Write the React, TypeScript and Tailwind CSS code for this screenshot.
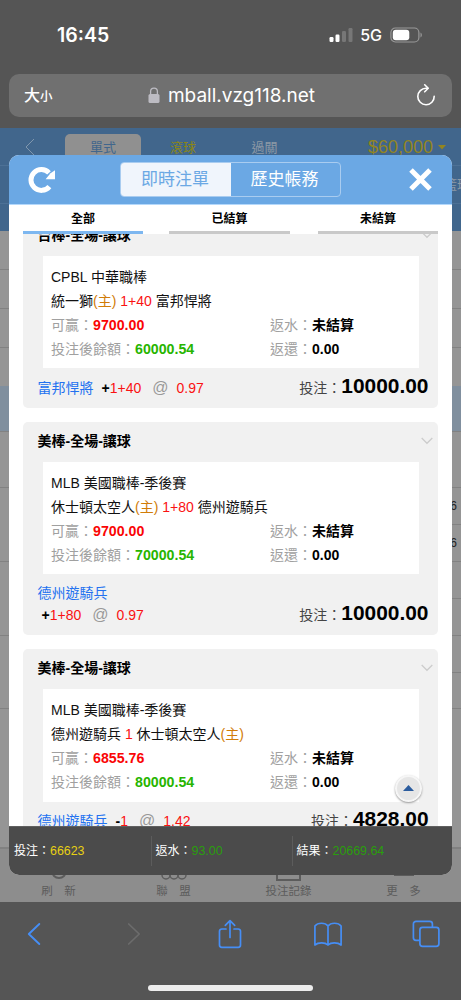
import React from 'react';

interface Bet {
  id: number;
  title: string;
  league: string;
  left: string;
  leftHome?: boolean;
  line: string;
  right: string;
  rightHome?: boolean;
  win: string;
  balance: string;
  pick: string;
  sign: string;
  pickLine: string;
  odds: string;
  stake: string;
  wrap?: boolean;
}

const BETS: Bet[] = [
  {
    id: 1, title: '台棒-全場-讓球', league: 'CPBL 中華職棒', left: '統一獅', leftHome: true, line: '1+40', right: '富邦悍將',
    win: '9700.00', balance: '60000.54', pick: '富邦悍將', sign: '+', pickLine: '1+40', odds: '0.97', stake: '10000.00',
  },
  {
    id: 2, title: '美棒-全場-讓球', league: 'MLB 美國職棒-季後賽', left: '休士頓太空人', leftHome: true, line: '1+80', right: '德州遊騎兵',
    win: '9700.00', balance: '70000.54', pick: '德州遊騎兵', sign: '+', pickLine: '1+80', odds: '0.97', stake: '10000.00', wrap: true,
  },
  {
    id: 3, title: '美棒-全場-讓球', league: 'MLB 美國職棒-季後賽', left: '德州遊騎兵', line: '1', right: '休士頓太空人', rightHome: true,
    win: '6855.76', balance: '80000.54', pick: '德州遊騎兵', sign: '-', pickLine: '1', odds: '1.42', stake: '4828.00',
  },
];

const StatusBar = () => (
  <div className="flex h-[74px] items-start justify-between pl-[57px] pr-[38px] pt-[20px] font-['Inter','Noto_Sans_CJK_TC',sans-serif] text-white">
    <span className="text-[19.5px] font-semibold leading-[30px]">16:45</span>
    <div className="flex h-[30px] items-center">
      <svg width="24" height="16" viewBox="0 0 24 16" className="mr-[7px]">
        <rect x="0.5" y="10" width="4" height="5" rx="1.2" fill="#fff" />
        <rect x="6.5" y="7.5" width="4" height="7.5" rx="1.2" fill="#fff" />
        <rect x="13" y="4" width="4" height="11" rx="1.2" fill="#777" />
        <rect x="19.5" y="1" width="4" height="14" rx="1.2" fill="#777" />
      </svg>
      <span className="mr-[8px] text-[16px] font-medium leading-[30px]">5G</span>
      <svg width="33" height="16" viewBox="0 0 33 16">
        <rect x="0.9" y="1" width="28" height="14" rx="4.5" fill="none" stroke="#999" strokeWidth="1.2" />
        <rect x="2.8" y="2.8" width="16.5" height="10.4" rx="3" fill="#fff" />
        <path d="M30.5 5.5c1.8.8 1.8 4.2 0 5z" fill="#999" />
      </svg>
    </div>
  </div>
);

const AddressBar = () => (
  <div className="mx-[9px] flex h-[43px] items-center justify-between rounded-[10px] bg-[#707070] pl-[15px] pr-[16px] font-['Inter','Noto_Sans_CJK_TC',sans-serif] text-white">
    <div className="flex w-[120px] items-baseline font-medium leading-none">
      <span className="text-[16px]">大</span>
      <span className="text-[12.5px]">小</span>
    </div>
    <div className="ml-[2px] flex items-center">
      <svg width="12" height="17" viewBox="0 0 12 17" className="mr-[8px]">
        <path d="M2.6 8V4.6a3.4 3.4 0 0 1 6.8 0V8" fill="none" stroke="#bdbcc3" strokeWidth="1.3" />
        <rect x="0.5" y="7" width="11" height="9" rx="1.6" fill="#bdbcc3" />
      </svg>
      <span className="text-[19px] leading-[24px]">mball.vzg118.net</span>
    </div>
    <div className="flex w-[119px] justify-end">
      <svg width="20" height="24" viewBox="0 0 20 24" className="mb-[2px]" fill="none" stroke="#fff" strokeWidth="1.6" strokeLinecap="round" strokeLinejoin="round">
        <path d="M11.8 5.3H10.2A8.2 8.2 0 1 0 18.2 13.3" />
        <path d="M8.7 1.8 12.2 5.3 8.7 8.8" />
      </svg>
    </div>
  </div>
);

// Dimmed betting page behind the dialog
const Backdrop = () => (
  <div className="flex h-full flex-col bg-[#959595]">
    <div className="h-[103px] bg-[#41668c]">
      <div className="flex h-[38px] items-start border-b border-[#4d7196] pt-[6px] text-[13px] leading-[27px]">
        <svg width="10" height="18" viewBox="0 0 10 18" className="ml-[25px] mt-[4px]" fill="none" stroke="#8097ae" strokeWidth="1">
          <path d="M9 1 1 9l8 8" />
        </svg>
        <div className="ml-[30px] h-[31px] w-[76px] rounded-t-[5px] bg-[#909090] text-center text-[#41668c]">單式</div>
        <div className="w-[84px] text-center text-[#8c8614]">滾球</div>
        <div className="w-[79px] text-center text-[#8d99a6]">過關</div>
        <div className="ml-[64px] text-[18px] leading-[26px] text-[#93851f]">$60,000</div>
        <svg width="8" height="5" viewBox="0 0 8 5" className="ml-[5px] mt-[11px]">
          <path d="M0 0h8L4 4.5z" fill="#93851f" />
        </svg>
      </div>
      <div className="flex h-[38px] items-center justify-end overflow-hidden border-b border-[#4d7196]">
        <span className="-mr-[9px] text-[13px] text-[#8d99a6]">籃球</span>
      </div>
    </div>
    <div className="h-[39px] border-b border-[#828282]" />
    <div className="h-[39px] border-b border-[#828282]" />
    <div className="h-[39px] border-b border-[#828282]" />
    <div className="h-[38px]" />
    <div className="h-[46px] border-b border-[#828282] bg-[#808f9e]" />
    <div className="flex h-[277px] justify-between">
      <div className="w-[20px]">
        <div className="h-[56px] border-b border-[#828282]" />
        <div className="h-[74px] border-b border-[#828282]" />
        <div className="h-[74px] border-b border-[#828282]" />
        <div className="h-[73px] border-b border-[#828282]" />
      </div>
      <div className="w-[20px] text-right text-[12px] text-[#222]">
        <div className="h-[56px] border-b border-[#828282]" />
        <div className="h-[37px] border-b border-[#828282] pr-[4px] leading-[37px]">6</div>
        <div className="h-[37px] border-b border-[#828282] pr-[4px] leading-[37px]">6</div>
        <div className="h-[37px] border-b border-[#828282]" />
        <div className="h-[37px] border-b border-[#828282]" />
        <div className="h-[37px] border-b border-[#828282]" />
        <div className="h-[36px] border-b border-[#828282]" />
      </div>
    </div>
    <div className="h-[138px]" />
    <div className="flex flex-1 items-end border-t-2 border-[#818181] bg-[#8d8d8d] text-center text-[11.5px] leading-[14px] text-[#5c5c5c]">
      <div className="ml-[1px] flex w-[115px] flex-col items-center pb-[4px]">
        <svg width="18" height="18" viewBox="0 0 18 18" className="mb-[3px]" fill="none" stroke="#5c5c5c" strokeWidth="2"><circle cx="9" cy="8" r="7" /></svg>
        <span>刷　新</span>
      </div>
      <div className="flex w-[115px] flex-col items-center pb-[4px]">
        <svg width="26" height="10" viewBox="0 0 26 10" className="mb-[4px]" fill="none" stroke="#5c5c5c" strokeWidth="1.5">
          <circle cx="5" cy="5" r="4" /><circle cx="13" cy="5" r="4" /><circle cx="21" cy="5" r="4" />
        </svg>
        <span>聯　盟</span>
      </div>
      <div className="flex w-[115px] flex-col items-center pb-[4px]">
        <div className="mb-[3px] h-[18px] w-[25px] border-2 border-[#5c5c5c]" />
        <span>投注記錄</span>
      </div>
      <div className="flex w-[115px] flex-col items-center pb-[4px]">
        <div className="mb-[8px] h-[2px] w-[20px] bg-[#5c5c5c]" />
        <span>更　多</span>
      </div>
    </div>
  </div>
);

const Home = () => <span className="text-[#d17c08]">(主)</span>;

const BetCard: React.FC<{ bet: Bet }> = ({ bet }) => (
  <div className="mb-[14px] shrink-0 rounded-[5px] bg-[#f1f1f1] text-[14px] leading-[24px] text-[#111]">
    <div className="flex h-[40px] items-center justify-between pb-[2px] pl-[14.5px] pr-[5px]">
      <span className="font-bold text-black">{bet.title}</span>
      <svg width="12" height="8" viewBox="0 0 12 8" fill="none" stroke="#ccc" strokeWidth="1.3">
        <path d="M0.7 1 6 6.3 11.3 1" />
      </svg>
    </div>
    <div className="ml-[20px] mr-[19.5px] h-[112.5px] bg-white pl-[8px] pt-[9px]">
      <div>{bet.league}</div>
      <div>
        {bet.left}{bet.leftHome && <Home />} <span className="text-[#fa1212]">{bet.line}</span> {bet.right}{bet.rightHome && <Home />}
      </div>
      <div className="flex text-[#a0a0a0]">
        <div className="w-[219px]">可贏：<b className="text-[14.2px] text-[#fa0505]">{bet.win}</b></div>
        <div>返水：<b className="text-black">未結算</b></div>
      </div>
      <div className="flex text-[#a0a0a0]">
        <div className="w-[219px]">投注後餘額：<b className="text-[14.2px] text-[#27b500]">{bet.balance}</b></div>
        <div>返還：<b className="text-black">0.00</b></div>
      </div>
    </div>
    <div className={`flex items-end justify-between pl-[14.5px] pr-[9.5px] ${bet.wrap ? 'h-[61px]' : 'h-[39.5px]'}`}>
      <div className={`pb-[9px] leading-[22px] ${bet.wrap ? '' : 'flex'}`}>
        <div className="text-[#2371f0]">{bet.pick}</div>
        <div className={`flex ${bet.wrap ? 'pl-[4px]' : 'pl-[8px]'}`}>
          <b className="text-black">{bet.sign}</b>
          <span className="text-[#fa1212]">{bet.pickLine}</span>
          <span className="ml-[11px] mr-[8px] text-[16px] text-[#999]">@</span>
          <span className="text-[#fa1212]">{bet.odds}</span>
        </div>
      </div>
      <div className="flex items-baseline pb-[8px] leading-[24px] text-[#444]">
        投注：<b className="text-[20.9px] text-black">{bet.stake}</b>
      </div>
    </div>
  </div>
);

const BetDialog = () => (
  <div className="absolute left-[9px] top-[27px] flex h-[720px] w-[443px] flex-col overflow-hidden rounded-[10px] bg-white">
    <div className="flex h-[50px] shrink-0 items-center border-b border-[#b4d8fb] bg-[#6ba8e4] pl-[19px]">
      <svg width="28" height="28" viewBox="0 0 28 28">
        <path d="M21.4 20.6A10.4 10.4 0 1 1 21 6.9" fill="none" stroke="#fff" strokeWidth="5" />
        <path d="M27 4.2V13.2H17.6L22.5 7.2z" fill="#fff" />
      </svg>
      <div className="ml-[64px] flex h-[35px] w-[221px] overflow-hidden rounded-[4px] border border-[#a9ccf0] text-[17px] leading-[34px]">
        <div className="w-[110px] bg-[#f0f5fc] pr-[2px] text-center text-[#6ba8e4]">即時注單</div>
        <div className="flex-1 pr-[2px] text-center text-white">歷史帳務</div>
      </div>
      <svg width="23" height="23" viewBox="0 0 23 23" className="ml-[68px]" fill="none" stroke="#fff" strokeWidth="5">
        <path d="M2 2 21 21M21 2 2 21" />
      </svg>
    </div>
    <div className="flex h-[29px] shrink-0 px-[14px] text-center text-[12px] font-bold leading-[28px] text-black">
      <div className="w-[120px] border-b-[3px] border-[#7db7f0]">全部</div>
      <div className="ml-[26px] w-[121px] border-b-[3px] border-[#c9c9c9]">已結算</div>
      <div className="ml-[28px] w-[120px] border-b-[3px] border-[#c9c9c9]">未結算</div>
    </div>
    <div className="flex min-h-0 flex-1 flex-col overflow-hidden px-[14px]">
      <div className="-mt-[18.5px] flex flex-col">
        {BETS.map((bet) => <BetCard key={bet.id} bet={bet} />)}
      </div>
    </div>
    <div className="flex h-[49px] shrink-0 items-center border-t border-[#606060] bg-[#4b4b4b] text-[12px] text-white">
      <div className="w-[142px] pl-[5px]">投注：<span className="text-[12.4px] text-[#e8d013]">66623</span></div>
      <div className="flex h-[30px] w-[141px] items-center border-l border-[#5c5c5c] pl-[3.5px]">返水：<span className="text-[12.4px] text-[#2a9e0c]">93.00</span></div>
      <div className="flex h-[30px] items-center border-l border-[#5c5c5c] pl-[3.5px]">結果：<span className="text-[12.4px] text-[#2a9e0c]">20669.64</span></div>
    </div>
    {/* Back to top */}
    <button className="absolute bottom-[73px] right-[30px] flex h-[27px] w-[27px] items-center justify-center rounded-full border-2 border-[#f6f6f6] bg-[#e6e6e6] shadow-[0_1px_2px_#999]">
      <svg width="11" height="6" viewBox="0 0 11 6" className="mb-[2px]"><path d="M5.5 0 11 6H0z" fill="#2b5c9e" /></svg>
    </button>
  </div>
);

const BrowserToolbar = () => (
  <div className="flex h-[98px] flex-col items-center justify-between pb-[9px] pt-[16px]">
    <div className="flex h-[32px] w-full items-center pl-[27px]">
      <svg width="14" height="24" viewBox="0 0 14 24" fill="none" stroke="#468ef5" strokeWidth="1.9" strokeLinecap="round" strokeLinejoin="round">
        <path d="M12.3 2 1.8 12l10.5 10" />
      </svg>
      <svg width="14" height="24" viewBox="0 0 14 24" className="ml-[86px]" fill="none" stroke="#6c6c6c" strokeWidth="1.7" strokeLinecap="round" strokeLinejoin="round">
        <path d="M1.7 2l10.5 10L1.7 22" />
      </svg>
      <svg width="24" height="30" viewBox="0 0 24 30" className="ml-[77px]" fill="none" stroke="#468ef5" strokeWidth="1.7" strokeLinecap="round" strokeLinejoin="round">
        <path d="M8 10H3.8A2.3 2.3 0 0 0 1.5 12.3V26A2.3 2.3 0 0 0 3.8 28.3H20.2A2.3 2.3 0 0 0 22.5 26V12.3A2.3 2.3 0 0 0 20.2 10H16" />
        <path d="M12 18.5V2M7.3 6.3 12 1.6l4.7 4.7" />
      </svg>
      <svg width="28" height="24" viewBox="0 0 28 24" className="ml-[72px]" fill="none" stroke="#468ef5" strokeWidth="1.7" strokeLinecap="round" strokeLinejoin="round">
        <path d="M14 4C11.2 .3 3.8.3.9 4V23C4.3 20.2 11 20.2 14 23 17 20.2 23.7 20.2 27.1 23V4C24.2.3 16.8.3 14 4zV23" />
      </svg>
      <svg width="28" height="28" viewBox="0 0 28 28" className="ml-[70px]" fill="none" stroke="#468ef5" strokeWidth="1.7" strokeLinejoin="round">
        <rect x="7.9" y="7.4" width="19" height="19" rx="2.6" />
        <path d="M7.9 20.4H4A2.6 2.6 0 0 1 1.4 17.8V4A2.6 2.6 0 0 1 4 1.4H17.8A2.6 2.6 0 0 1 20.4 4V7.4" />
      </svg>
    </div>
    <div className="h-[6px] w-[165px] rounded-full bg-[#ededed]" />
  </div>
);

export default function App() {
  return (
    <div lang="zh-Hant" className="h-[1000px] w-[461px] overflow-hidden bg-[#555] font-['Liberation_Sans','Noto_Sans_CJK_TC',sans-serif]">
      <div className="h-[128px]">
        <StatusBar />
        <AddressBar />
      </div>
      <div className="relative h-[774px] overflow-hidden">
        <Backdrop />
        <BetDialog />
      </div>
      <BrowserToolbar />
    </div>
  );
}
